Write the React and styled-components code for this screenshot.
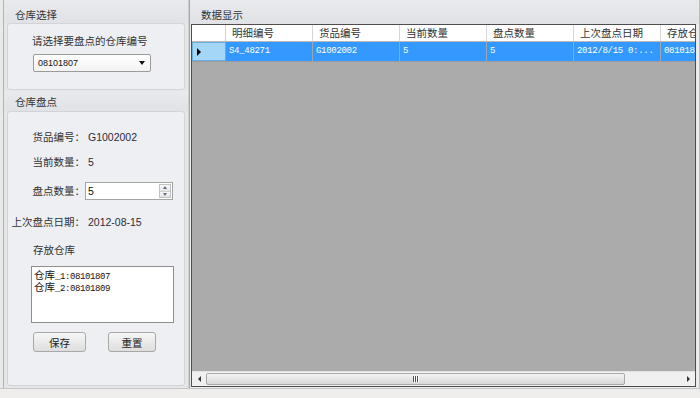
import styled, { createGlobalStyle } from "styled-components";

const GlobalStyle = createGlobalStyle`
  html, body { margin: 0; padding: 0; }
  body {
    font-family: "Noto Sans CJK SC", "Noto Sans", sans-serif;
    background: #efeeec;
  }
`;

const Window = styled.div`
  width: 700px;
  height: 398px;
  display: flex;
  flex-direction: column;
  overflow: hidden;
  background: #e9e9e9;
`;

const Main = styled.div`
  display: flex;
  height: 389px;
  box-sizing: border-box;
  border-bottom: 1px solid #c6c6c6;
`;

const StatusStrip = styled.div`
  flex: 1;
  background: #efeeec;
`;

/* ---------- left side ---------- */

const LeftPanel = styled.div`
  flex: none;
  width: 186px;
  margin-left: 3px;
  box-sizing: border-box;
  border-left: 1px solid #b2b2b2;
  border-right: 1px solid #cfcfcf;
  background: #e5e6e9;
  display: flex;
  flex-direction: column;
`;

const GroupHeader = styled.div`
  flex: none;
  height: ${(p) => p.$h}px;
  box-sizing: border-box;
  padding: ${(p) => p.$pt}px 0 0 11px;
  font-size: 10.5px;
  line-height: 17px;
  color: #333;
  background: linear-gradient(#e9eaed, #e1e2e6);
`;

const GroupBody = styled.div`
  margin: 0 3px ${(p) => p.$mb}px;
  height: ${(p) => (p.$h ? `${p.$h}px` : "auto")};
  flex: ${(p) => (p.$h ? "none" : 1)};
  box-sizing: border-box;
  border: 1px solid #d3d4d8;
  border-radius: 3px;
  background: #eeeff2;
  display: flex;
  flex-direction: column;
`;

const Prompt = styled.div`
  padding: 10px 0 0 24px;
  font-size: 10.5px;
  line-height: 14px;
  color: #333;
`;

const Combo = styled.div`
  margin: 6px 0 0 25px;
  width: 118px;
  height: 18px;
  box-sizing: border-box;
  border: 1px solid #9b9b9b;
  border-radius: 2px;
  background: linear-gradient(#ffffff, #f3f3f3);
  display: flex;
  align-items: center;
  justify-content: space-between;
  padding: 0 5px 0 4px;
  font: 9px "Liberation Sans", Arial, sans-serif;
  color: #111;
`;

const DownArrow = styled.span`
  width: 0;
  height: 0;
  border-left: 3.5px solid transparent;
  border-right: 3.5px solid transparent;
  border-top: 4px solid #111;
`;

const FormRow = styled.div`
  display: flex;
  align-items: center;
  margin-top: ${(p) => p.$gap}px;
  height: ${(p) => p.$h || 16}px;
`;

const Label = styled.div`
  width: 77px;
  text-align: right;
  font-size: 10.5px;
  line-height: 16px;
  color: #333;
  white-space: nowrap;
`;

const Value = styled.div`
  margin-left: 3px;
  font: 10.5px "Liberation Sans", Arial, sans-serif;
  color: #2b2b3a;
`;

const SpinBox = styled.div`
  width: 88px;
  height: 18px;
  box-sizing: border-box;
  border: 1px solid #a3a3a3;
  background: #fff;
  display: flex;
  align-items: center;
  justify-content: space-between;
  padding: 0 1px 0 2px;
  font: 10.5px "Liberation Sans", Arial, sans-serif;
  color: #111;
`;

const SpinButtons = styled.div`
  width: 12px;
  height: 14px;
  display: flex;
  flex-direction: column;
  border: 1px solid #c2c2c2;
  box-sizing: border-box;
`;

const SpinHalf = styled.div`
  flex: 1;
  display: flex;
  align-items: center;
  justify-content: center;
  background: linear-gradient(#f8f8f8, #e4e4e4);
  border-top: ${(p) => (p.$down ? "1px solid #cfcfcf" : "none")};
`;

const SpinArrow = styled.span`
  width: 0;
  height: 0;
  border-left: 2.5px solid transparent;
  border-right: 2.5px solid transparent;
  border-bottom: ${(p) => (p.$down ? "none" : "3px solid #5c6f8a")};
  border-top: ${(p) => (p.$down ? "3px solid #5c6f8a" : "none")};
`;

const SubTitle = styled.div`
  margin-top: 12px;
  padding-left: 25px;
  font-size: 10.5px;
  line-height: 16px;
  color: #333;
`;

const ListBox = styled.div`
  margin: 8px 0 0 23px;
  width: 143px;
  height: 57px;
  box-sizing: border-box;
  border: 1px solid #8e8e8e;
  background: #fff;
  padding: 2px 2px;
  font: 9px "Liberation Mono", "Noto Sans CJK SC", monospace;
  letter-spacing: -0.4px;
  color: #111;
`;

const ListItem = styled.div`
  height: 12px;
  line-height: 12px;
  white-space: nowrap;
`;

const Cjk = styled.span`
  font-family: "Noto Sans CJK SC", sans-serif;
  font-size: 10.5px;
  line-height: 12px;
  letter-spacing: 0;
`;

const ButtonRow = styled.div`
  display: flex;
  gap: 22px;
  margin: 9px 0 0 25px;
`;

const Button = styled.div`
  width: ${(p) => p.$w}px;
  height: 20px;
  box-sizing: border-box;
  border: 1px solid #a9a9a9;
  border-radius: 3px;
  background: linear-gradient(#f6f6f6, #dedede);
  display: flex;
  align-items: center;
  justify-content: center;
  font-size: 10.5px;
  color: #222;
`;

/* ---------- right side ---------- */

const RightPanel = styled.div`
  flex: 1;
  min-width: 0;
  box-sizing: border-box;
  border-left: 1px solid #a7a7a7;
  border-right: 1px solid #bdbdbd;
  background: #ebebeb;
  display: flex;
  flex-direction: column;
`;

const Grid = styled.div`
  flex: 1;
  min-width: 0;
  margin: 0 3px 1px 1px;
  border: 1px solid #4e4e4e;
  display: flex;
  flex-direction: column;
  overflow: hidden;
  background: #ababab;
`;

const HeaderRow = styled.div`
  display: flex;
  height: 17px;
  flex: none;
  background: #fff;
  border-bottom: 1px solid #b9b9b9;
  box-sizing: border-box;
`;

const CornerCell = styled.div`
  width: 34px;
  flex: none;
  box-sizing: border-box;
  border-right: 1px solid #cfcfcf;
`;

const HeadCell = styled.div`
  width: 87px;
  flex: none;
  box-sizing: border-box;
  border-right: 1px solid #d6d6d6;
  padding-left: 6px;
  font-size: 10.5px;
  line-height: 16px;
  color: #333;
  white-space: nowrap;
  overflow: hidden;
`;

const DataRow = styled.div`
  display: flex;
  height: 20px;
  flex: none;
  box-sizing: border-box;
  border-bottom: 1px solid #9c9c9c;
`;

const RowHeader = styled.div`
  width: 34px;
  flex: none;
  box-sizing: border-box;
  border: 1px solid #6aaede;
  border-right-color: #9c9c9c;
  background: #a3d6f7;
  display: flex;
  align-items: center;
  padding-left: 4px;
`;

const RowMarker = styled.span`
  width: 0;
  height: 0;
  border-top: 4px solid transparent;
  border-bottom: 4px solid transparent;
  border-left: 4px solid #000;
`;

const Cell = styled.div`
  width: 87px;
  flex: none;
  box-sizing: border-box;
  border-right: 1px solid #9aa7b6;
  background: #3399ff;
  padding-left: 3px;
  font: 9px "Liberation Mono", monospace;
  letter-spacing: -0.3px;
  line-height: 19px;
  color: #fff;
  white-space: nowrap;
  overflow: hidden;
`;

const Fill = styled.div`
  flex: 1;
`;

const HScroll = styled.div`
  height: 14px;
  flex: none;
  display: flex;
  align-items: stretch;
  background: #f0f0f0;
  border-top: 1px solid #e2e2e2;
`;

const ScrollArrow = styled.div`
  width: 14px;
  flex: none;
  display: flex;
  align-items: center;
  justify-content: center;
  &::after {
    content: "";
    width: 0;
    height: 0;
    border-top: 3.5px solid transparent;
    border-bottom: 3.5px solid transparent;
    ${(p) => (p.$right ? "border-left: 3.5px solid #333;" : "border-right: 3.5px solid #333;")}
  }
`;

const Thumb = styled.div`
  width: 419px;
  flex: none;
  margin: 1px 0;
  box-sizing: border-box;
  border: 1px solid #a9a9a9;
  border-radius: 2px;
  background: linear-gradient(#f3f3f3, #d8d8d8);
  display: flex;
  align-items: center;
  justify-content: center;
  gap: 1px;
`;

const Grip = styled.span`
  width: 1px;
  height: 6px;
  background: #555;
  box-shadow: 1px 0 0 #fff;
`;

const Track = styled.div`
  flex: 1;
`;

const columns = ["明细编号", "货品编号", "当前数量", "盘点数量", "上次盘点日期", "存放仓库"];
const row = ["S4_48271", "G1002002", "5", "5", "2012/8/15 0:...", "08101807"];

export default function App() {
  return (
    <Window>
      <GlobalStyle />
      <Main>
        <LeftPanel>
          <GroupHeader $h={23} $pt={6}>仓库选择</GroupHeader>
          <GroupBody $h={67} $mb={1}>
            <Prompt>请选择要盘点的仓库编号</Prompt>
            <Combo>
              <span>08101807</span>
              <DownArrow />
            </Combo>
          </GroupBody>

          <GroupHeader $h={20} $pt={2}>仓库盘点</GroupHeader>
          <GroupBody $mb={2}>
            <FormRow $gap={17}>
              <Label>货品编号：</Label>
              <Value>G1002002</Value>
            </FormRow>
            <FormRow $gap={9}>
              <Label>当前数量：</Label>
              <Value>5</Value>
            </FormRow>
            <FormRow $gap={12} $h={18}>
              <Label>盘点数量：</Label>
              <SpinBox>
                <span>5</span>
                <SpinButtons>
                  <SpinHalf>
                    <SpinArrow />
                  </SpinHalf>
                  <SpinHalf $down>
                    <SpinArrow $down />
                  </SpinHalf>
                </SpinButtons>
              </SpinBox>
            </FormRow>
            <FormRow $gap={14}>
              <Label>上次盘点日期：</Label>
              <Value>2012-08-15</Value>
            </FormRow>
            <SubTitle>存放仓库</SubTitle>
            <ListBox>
              <ListItem>
                <Cjk>仓库</Cjk>_1:08101807
              </ListItem>
              <ListItem>
                <Cjk>仓库</Cjk>_2:08101809
              </ListItem>
            </ListBox>
            <ButtonRow>
              <Button $w={53}>保存</Button>
              <Button $w={48}>重置</Button>
            </ButtonRow>
          </GroupBody>
        </LeftPanel>

        <RightPanel>
          <GroupHeader $h={24} $pt={6}>数据显示</GroupHeader>
          <Grid>
            <HeaderRow>
              <CornerCell />
              {columns.map((c) => (
                <HeadCell key={c}>{c}</HeadCell>
              ))}
            </HeaderRow>
            <DataRow>
              <RowHeader>
                <RowMarker />
              </RowHeader>
              {row.map((v, i) => (
                <Cell key={i}>{v}</Cell>
              ))}
            </DataRow>
            <Fill />
            <HScroll>
              <ScrollArrow />
              <Thumb>
                <Grip />
                <Grip />
                <Grip />
              </Thumb>
              <Track />
              <ScrollArrow $right />
            </HScroll>
          </Grid>
        </RightPanel>
      </Main>
      <StatusStrip />
    </Window>
  );
}
